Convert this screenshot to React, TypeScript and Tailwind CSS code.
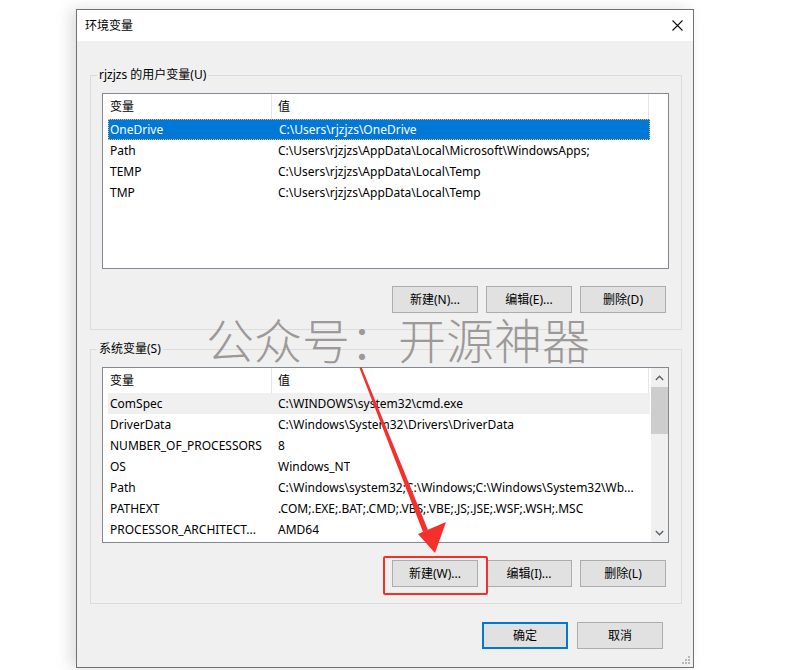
import React from "react";

const FONT = { fontFamily: "'Noto Sans', 'Noto Sans CJK SC', sans-serif" };

function Btn({ label, primary = false }: { label: string; primary?: boolean }) {
  return (
    <div
      className={
        "w-[86px] h-[27px] bg-[#e1e1e1] flex items-center justify-center text-[12px] text-black " +
        (primary ? "border-2 border-[#0078d7]" : "border border-[#adadad]")
      }
    >
      {label}
    </div>
  );
}

type Row = [string, string];

function ListBox({
  rows,
  selected,
  hover,
  scroll,
}: {
  rows: Row[];
  selected?: number;
  hover?: number;
  scroll?: boolean;
}) {
  return (
    <div className="mt-[10px] ml-[11px] w-[567px] h-[176px] border border-[#828790] bg-white flex">
      <div className="flex-1 flex flex-col min-w-0">
        <div className="h-[25px] flex text-[12px] text-black">
          <div className="w-[169px] border-r border-[#e5e5e5] pl-[7px] flex items-center">变量</div>
          <div className="w-[377px] border-r border-[#e5e5e5] pl-[6px] flex items-center">值</div>
        </div>
        <div className="pl-[5px] flex flex-col">
          {rows.map((r, i) => {
            const sel = i === selected;
            const hov = i === hover;
            return (
              <div
                key={i}
                className={
                  "w-[542px] h-[21px] flex items-center text-[12px] whitespace-nowrap " +
                  (sel
                    ? "bg-[#0078d7] text-white border border-dotted border-[#f5b56a]"
                    : hov
                    ? "bg-[#f0f0f0] text-black"
                    : "text-black")
                }
              >
                <div className={"w-[168px] overflow-hidden " + (sel ? "pl-[1px]" : "pl-[2px]")}>{r[0]}</div>
                <div className="pl-[2px] overflow-hidden">{r[1]}</div>
              </div>
            );
          })}
        </div>
      </div>
      {scroll && (
        <div className="w-[17px] bg-[#f0f0f0] flex flex-col items-center">
          <div className="h-[19px] w-full flex items-center justify-center">
            <svg width="9" height="6" viewBox="0 0 9 6">
              <path d="M0.8 5 L4.5 1.3 L8.2 5" fill="none" stroke="#606060" strokeWidth="1.4" />
            </svg>
          </div>
          <div className="w-[17px] h-[47px] bg-[#cdcdcd]" />
          <div className="flex-1" />
          <div className="h-[19px] w-full flex items-center justify-center">
            <svg width="9" height="6" viewBox="0 0 9 6">
              <path d="M0.8 1 L4.5 4.7 L8.2 1" fill="none" stroke="#606060" strokeWidth="1.4" />
            </svg>
          </div>
        </div>
      )}
    </div>
  );
}

export default function App() {
  const userRows: Row[] = [
    ["OneDrive", "C:\\Users\\rjzjzs\\OneDrive"],
    ["Path", "C:\\Users\\rjzjzs\\AppData\\Local\\Microsoft\\WindowsApps;"],
    ["TEMP", "C:\\Users\\rjzjzs\\AppData\\Local\\Temp"],
    ["TMP", "C:\\Users\\rjzjzs\\AppData\\Local\\Temp"],
  ];
  const sysRows: Row[] = [
    ["ComSpec", "C:\\WINDOWS\\system32\\cmd.exe"],
    ["DriverData", "C:\\Windows\\System32\\Drivers\\DriverData"],
    ["NUMBER_OF_PROCESSORS", "8"],
    ["OS", "Windows_NT"],
    ["Path", "C:\\Windows\\system32;C:\\Windows;C:\\Windows\\System32\\Wb..."],
    ["PATHEXT", ".COM;.EXE;.BAT;.CMD;.VBS;.VBE;.JS;.JSE;.WSF;.WSH;.MSC"],
    ["PROCESSOR_ARCHITECT...", "AMD64"],
  ];

  return (
    <div className="w-[792px] h-[670px] bg-white relative overflow-hidden" style={FONT}>
      <div className="ml-[76px] pt-[9px]">
        <div className="relative w-[618px] h-[659px] border border-[#707070] bg-[#f0f0f0] flex flex-col shadow-[-6px_0_14px_rgba(0,0,0,0.13)]">
          {/* title bar */}
          <div className="h-[31px] bg-white flex items-center pl-[8px] text-[12px] text-black">
            <span className="flex-1">环境变量</span>
            <svg width="11" height="11" viewBox="0 0 11 11" className="mr-[10px]">
              <path d="M0.5 0.5 L10.5 10.5 M10.5 0.5 L0.5 10.5" stroke="#111" strokeWidth="1.1" />
            </svg>
          </div>

          {/* user vars */}
          <fieldset className="mt-[26px] ml-[13px] w-[592px] border border-[#dcdcdc] p-0 m-0">
            <legend className="ml-[6px] px-[2px] text-[12px] leading-[16px] text-black">rjzjzs 的用户变量(U)</legend>
            <ListBox rows={userRows} selected={0} />
            <div className="mt-[17px] mb-[16px] pr-[15px] flex justify-end gap-[8px]">
              <Btn label="新建(N)..." />
              <Btn label="编辑(E)..." />
              <Btn label="删除(D)" />
            </div>
          </fieldset>

          {/* system vars */}
          <fieldset className="mt-[11px] ml-[13px] w-[592px] border border-[#dcdcdc] p-0 m-0">
            <legend className="ml-[6px] px-[2px] text-[12px] leading-[16px] text-black">系统变量(S)</legend>
            <ListBox rows={sysRows} hover={0} scroll />
            <div className="mt-[17px] mb-[16px] pr-[15px] flex justify-end gap-[8px]">
              <Btn label="新建(W)..." />
              <Btn label="编辑(I)..." />
              <Btn label="删除(L)" />
            </div>
          </fieldset>

          <div className="mt-[18px] pr-[30px] flex justify-end gap-[9px]">
            <Btn label="确定" primary />
            <Btn label="取消" />
          </div>

          {/* resize grip */}
          <svg width="10" height="10" viewBox="0 0 10 10" className="absolute right-[2px] bottom-[2px]">
            <rect x="7" y="1" width="2" height="2" fill="#b8b8b8" />
            <rect x="4" y="4" width="2" height="2" fill="#b8b8b8" />
            <rect x="7" y="4" width="2" height="2" fill="#b8b8b8" />
            <rect x="1" y="7" width="2" height="2" fill="#b8b8b8" />
            <rect x="4" y="7" width="2" height="2" fill="#b8b8b8" />
            <rect x="7" y="7" width="2" height="2" fill="#b8b8b8" />
          </svg>
        </div>
      </div>

      {/* watermark */}
      <div
        className="absolute left-[206px] top-[311px] text-[48px] leading-[55px] font-light text-[#8f8a8a]/85 whitespace-nowrap pointer-events-none"
        style={{ fontFamily: "'Noto Sans CJK SC', sans-serif" }}
      >
        公众号：开源神器
      </div>

      {/* red highlight box */}
      <div className="absolute left-[383px] top-[556px] w-[105px] h-[39px] border-2 border-[#f5302a] rounded-[2px] pointer-events-none" />

      {/* red arrow */}
      <svg width="792" height="670" className="absolute left-0 top-0 pointer-events-none">
        <polygon points="359.5,368 361.5,367 428,530 423,532" fill="#f5302a" />
        <polygon points="435,553 418,534 446,522" fill="#f5302a" />
      </svg>
    </div>
  );
}
